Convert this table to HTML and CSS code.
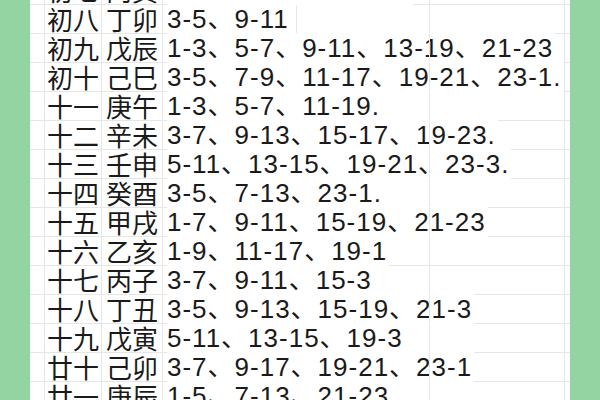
FILE: index.html
```html
<!DOCTYPE html>
<html lang="zh">
<head>
<meta charset="utf-8">
<link rel="stylesheet" href="styles.css">
</head>
<body>
<div class="frame">
  <div class="side"></div>
  <div class="sheet">
    <div class="rows">
      <div class="row"><div class="c"></div><div class="c">初七</div><div class="c k">丙寅</div><div class="c d"><span>3-7、11-13、15-17.</span></div><div class="c"></div><div class="c"></div><div class="c"></div></div>
      <div class="row"><div class="c"></div><div class="c">初八</div><div class="c k">丁卯</div><div class="c d"><span>3-5、9-11</span></div><div class="c"></div><div class="c"></div><div class="c"></div></div>
      <div class="row"><div class="c"></div><div class="c">初九</div><div class="c k">戊辰</div><div class="c d"><span>1-3、5-7、9-11、13-19、21-23</span></div><div class="c"></div><div class="c"></div><div class="c"></div></div>
      <div class="row"><div class="c"></div><div class="c">初十</div><div class="c k">己巳</div><div class="c d"><span>3-5、7-9、11-17、19-21、23-1.</span></div><div class="c"></div><div class="c"></div><div class="c"></div></div>
      <div class="row"><div class="c"></div><div class="c">十一</div><div class="c k">庚午</div><div class="c d"><span>1-3、5-7、11-19.</span></div><div class="c"></div><div class="c"></div><div class="c"></div></div>
      <div class="row"><div class="c"></div><div class="c">十二</div><div class="c k">辛未</div><div class="c d"><span>3-7、9-13、15-17、19-23.</span></div><div class="c"></div><div class="c"></div><div class="c"></div></div>
      <div class="row"><div class="c"></div><div class="c">十三</div><div class="c k">壬申</div><div class="c d"><span>5-11、13-15、19-21、23-3.</span></div><div class="c"></div><div class="c"></div><div class="c"></div></div>
      <div class="row"><div class="c"></div><div class="c">十四</div><div class="c k">癸酉</div><div class="c d"><span>3-5、7-13、23-1.</span></div><div class="c"></div><div class="c"></div><div class="c"></div></div>
      <div class="row"><div class="c"></div><div class="c">十五</div><div class="c k">甲戌</div><div class="c d"><span>1-7、9-11、15-19、21-23</span></div><div class="c"></div><div class="c"></div><div class="c"></div></div>
      <div class="row"><div class="c"></div><div class="c">十六</div><div class="c k">乙亥</div><div class="c d"><span>1-9、11-17、19-1</span></div><div class="c"></div><div class="c"></div><div class="c"></div></div>
      <div class="row"><div class="c"></div><div class="c">十七</div><div class="c k">丙子</div><div class="c d"><span>3-7、9-11、15-3</span></div><div class="c"></div><div class="c"></div><div class="c"></div></div>
      <div class="row"><div class="c"></div><div class="c">十八</div><div class="c k">丁丑</div><div class="c d"><span>3-5、9-13、15-19、21-3</span></div><div class="c"></div><div class="c"></div><div class="c"></div></div>
      <div class="row"><div class="c"></div><div class="c">十九</div><div class="c k">戊寅</div><div class="c d"><span>5-11、13-15、19-3</span></div><div class="c"></div><div class="c"></div><div class="c"></div></div>
      <div class="row"><div class="c"></div><div class="c">廿十</div><div class="c k">己卯</div><div class="c d"><span>3-7、9-17、19-21、23-1</span></div><div class="c"></div><div class="c"></div><div class="c"></div></div>
      <div class="row"><div class="c"></div><div class="c">廿一</div><div class="c k">庚辰</div><div class="c d"><span>1-5、7-13、21-23</span></div><div class="c"></div><div class="c"></div><div class="c"></div></div>
    </div>
  </div>
  <div class="side"></div>
</div>
</body>
</html>
```
FILE: styles.css
```css
html, body {
  margin: 0;
  padding: 0;
  width: 600px;
  height: 400px;
  overflow: hidden;
  background: #ffffff;
}

.frame {
  display: flex;
  width: 600px;
  height: 400px;
}

.side {
  width: 30px;
  flex: none;
  background: #93d4a2;
}

.sheet {
  width: 540px;
  flex: none;
  height: 400px;
  overflow: hidden;
  background: #ffffff;
}

.rows {
  margin-top: -24px;
}

.row {
  display: grid;
  grid-template-columns: 15px 57px 61px 134px 133px 135px 5px;
  height: 29px;
  box-sizing: border-box;
  border-bottom: 1px solid #e6e6e6;
  font-size: 26px;
  color: #1a1a1a;
}

.c {
  box-sizing: border-box;
  border-right: 1px solid #e6e6e6;
  padding-left: 2px;
  line-height: 28px;
  white-space: nowrap;
  overflow: visible;
  font-family: "Noto Sans CJK SC", sans-serif;
}

.c.k {
  padding-left: 4px;
}

.c:last-child {
  border-right: none;
}

.c.d {
  padding-left: 4px;
  font-family: "Liberation Sans", "Noto Sans CJK SC", sans-serif;
  letter-spacing: 1px;
}

.d span {
  background: #ffffff;
  padding-right: 2px;
}
```
